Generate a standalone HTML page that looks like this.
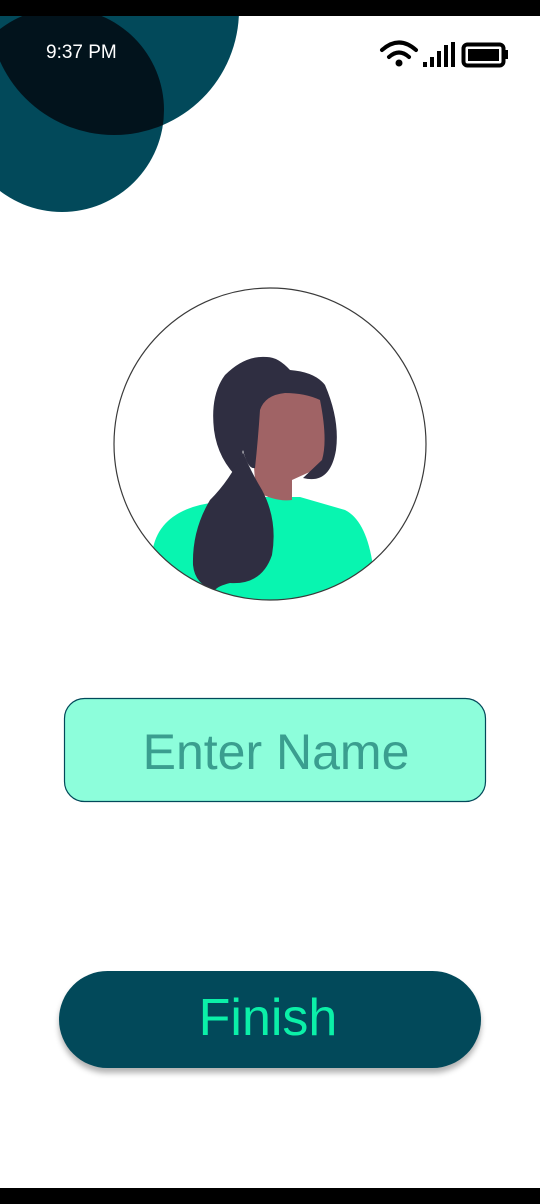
<!DOCTYPE html>
<html><head><meta charset="utf-8"><style>
html,body{margin:0;padding:0;}
body{width:540px;height:1204px;position:relative;overflow:hidden;background:#fff;font-family:"Liberation Sans",sans-serif;}
.abs{position:absolute;}
</style></head><body>
<svg class="abs" style="left:0;top:0" width="540" height="1204" viewBox="0 0 540 1204">
  <defs>
    <clipPath id="cA"><circle cx="62" cy="110" r="102"/></clipPath>
    <clipPath id="av"><circle cx="270" cy="444" r="156"/></clipPath>
  </defs>
  <circle cx="62" cy="110" r="102" fill="#02495a"/>
  <circle cx="114" cy="10" r="125" fill="#02495a"/>
  <circle cx="114" cy="10" r="125" fill="#02131c" clip-path="url(#cA)"/>
  <rect x="0" y="0" width="540" height="16" fill="#000"/>
  <rect x="0" y="1188" width="540" height="16" fill="#000"/>
  <text x="46" y="58" font-family="Liberation Sans" font-size="19" fill="#fff">9:37 PM</text>
  <path d="M382 50 Q399 35 416 50" stroke="#000" stroke-width="4" fill="none" stroke-linecap="round"/>
  <path d="M389 57 Q399 48 409 57" stroke="#000" stroke-width="4" fill="none" stroke-linecap="round"/>
  <circle cx="399" cy="63" r="3.5" fill="#000"/>
  <rect x="423" y="62" width="4" height="5" fill="#000"/>
  <rect x="430" y="57" width="4" height="10" fill="#000"/>
  <rect x="437" y="51" width="4" height="16" fill="#000"/>
  <rect x="444" y="45" width="4" height="22" fill="#000"/>
  <rect x="451" y="42" width="4" height="25" fill="#000"/>
  <rect x="463.5" y="44.5" width="40" height="21" rx="4" fill="none" stroke="#000" stroke-width="4"/>
  <rect x="468" y="49" width="31" height="12" fill="#000"/>
  <rect x="504" y="50" width="4" height="9" fill="#000"/>
  <g clip-path="url(#av)">
    <path d="M153 548 Q160 515 200 505 L240 497 L300 497 L345 510 Q365 520 372 560 L380 620 L150 620 Z" fill="#08f5b0"/>
    <path d="M257 400 Q290 385 320 398 Q330 430 325 465 L292 480 L292 500 Q275 502 258 492 Q250 470 257 400 Z" fill="#a06365"/>
    <path d="M267 357 Q245 355 225 375 Q210 395 214 430 Q218 460 240 480 Q240 460 243 450 Q248 470 255 468 Q258 440 260 410 Q265 395 285 393 Q305 393 320 400 Q328 440 322 460 L303 478 Q330 485 336 450 Q340 420 325 385 Q315 372 290 370 Q278 357 267 357 Z" fill="#2f2e41"/>
    <path d="M243 452 Q250 470 262 490 Q278 520 272 555 Q262 585 230 583 Q218 586 215 590 Q195 585 193 565 Q192 530 210 500 Q230 480 243 452 Z" fill="#2f2e41"/>
  </g>
  <circle cx="270" cy="444" r="156" fill="none" stroke="#3a3a3a" stroke-width="1.2"/>
  <rect x="64.5" y="698.5" width="421" height="103" rx="20" fill="#8dfedb" stroke="#02495a" stroke-width="1.2"/>
  <text x="276" y="769" text-anchor="middle" font-family="Liberation Sans" font-size="50" fill="#3a9e8f">Enter Name</text>
</svg>
<div class="abs" style="left:59px;top:971px;width:422px;height:97px;border-radius:49px;background:#02495a;box-shadow:0 5px 6px rgba(0,0,0,0.3);"></div>
<svg class="abs" style="left:0;top:0" width="540" height="1204"><text x="268" y="1035" text-anchor="middle" font-family="Liberation Sans" font-size="52" fill="#0bf0a8">Finish</text></svg>
</body></html>
